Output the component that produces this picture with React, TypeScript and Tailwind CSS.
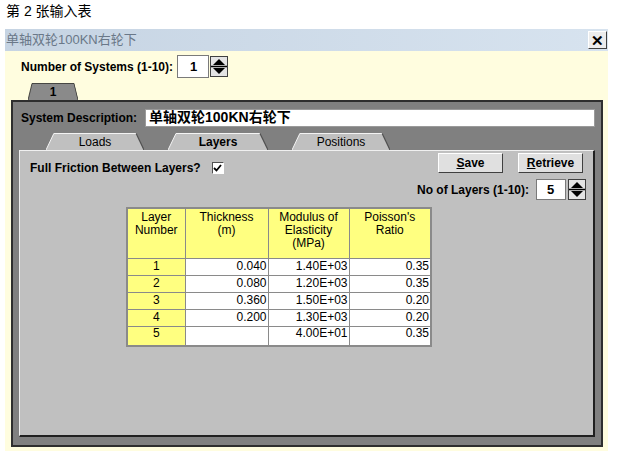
import React from "react";

const Spinner = () => (
  <svg width="18" height="21" viewBox="0 0 18 21" className="block shrink-0">
    <rect x="0.5" y="0.5" width="17" height="20" fill="#e4e4e4" stroke="#404040" />
    <polygon points="3,9 9,3 15,9" fill="#000" />
    <line x1="1" y1="10.5" x2="17" y2="10.5" stroke="#000" strokeWidth="1.5" />
    <polygon points="3,12 15,12 9,18" fill="#000" />
  </svg>
);

const TabShape = ({ fill, light, dark }: { fill: string; light: string; dark: string }) => (
  <svg
    className="absolute inset-0 h-full w-full"
    viewBox="0 0 100 17"
    preserveAspectRatio="none"
  >
    <polygon points="0,17 8,0.5 92,0.5 100,17" fill={fill} />
    <polyline points="0,17 8,0.5 92,0.5" fill="none" stroke={light} strokeWidth="1" />
    <polyline points="92,0.5 100,17" fill="none" stroke={dark} strokeWidth="1.2" />
  </svg>
);

const rows = [
  ["1", "0.040", "1.40E+03", "0.35"],
  ["2", "0.080", "1.20E+03", "0.35"],
  ["3", "0.360", "1.50E+03", "0.20"],
  ["4", "0.200", "1.30E+03", "0.20"],
  ["5", "", "4.00E+01", "0.35"],
];

export default function App() {
  return (
    <div className="h-[451px] w-[622px] overflow-hidden bg-white font-['Liberation_Sans','Noto_Sans_CJK_SC',sans-serif] text-black">
      <div className="h-[29px] pl-[6px] pt-[3px] text-[14px] leading-[16px]">第 2 张输入表</div>
      <div className="ml-[5px] w-[603px]">
        <div className="flex h-[22px] items-center justify-between bg-gradient-to-r from-[#c6d4e3] to-[#d7e3ef] pl-[1px] pr-[1px]">
          <span className="text-[13px] text-[#6a7888]">单轴双轮100KN右轮下</span>
          <div className="flex h-[18px] w-[19px] items-center justify-center border border-t-white border-l-white border-r-[#404040] border-b-[#404040] bg-[#ececec] text-[15px] font-bold leading-none">
            ✕
          </div>
        </div>
        <div className="h-[400px] bg-[#fffddf] pt-[4px]">
          <div className="flex h-[23px] items-center pl-[16px]">
            <span className="text-[12px] font-bold">Number of Systems (1-10):</span>
            <div className="ml-[4px] flex h-[23px] w-[32px] items-center border border-[#7a7a7a] bg-white pl-[12px] text-[13px] font-bold">
              1
            </div>
            <div className="ml-[1px]">
              <Spinner />
            </div>
          </div>
          <div className="mt-[5px] flex h-[17px] pl-[23px]">
            <div className="relative flex h-[17px] w-[50px] items-center justify-center">
              <TabShape fill="#8a8a8a" light="#1e1e1e" dark="#1e1e1e" />
              <span className="relative text-[12px] font-bold leading-none">1</span>
            </div>
          </div>
          <div className="ml-[6px] h-[347px] w-[592px] border-2 border-[#2e2e2e] bg-[#808080] px-[6px] pt-[6px]">
            <div className="flex h-[19px] items-center">
              <span className="pl-[2px] text-[12px] font-bold">System Description:</span>
              <div className="ml-[8px] flex h-[18px] flex-1 items-center border border-[#9a9a9a] bg-white pl-[3px] text-[14px] font-bold">
                单轴双轮100KN右轮下
              </div>
            </div>
            <div className="mt-[6px] flex h-[17px] pl-[27px]">
              <div className="relative flex h-[17px] w-[98px] items-center justify-center">
                <TabShape fill="#c0c0c0" light="#f4f4f4" dark="#505050" />
                <span className="relative text-[12px] leading-none">Loads</span>
              </div>
              <div className="relative ml-[24px] flex h-[17px] w-[100px] items-center justify-center">
                <TabShape fill="#c0c0c0" light="#f4f4f4" dark="#505050" />
                <span className="relative text-[12px] font-bold leading-none">Layers</span>
              </div>
              <div className="relative ml-[24px] flex h-[17px] w-[98px] items-center justify-center">
                <TabShape fill="#c0c0c0" light="#f4f4f4" dark="#505050" />
                <span className="relative text-[12px] leading-none">Positions</span>
              </div>
            </div>
            <div className="h-[287px] border-t border-l border-t-[#f0f0f0] border-l-[#f0f0f0] border-r-2 border-b-2 border-r-[#202020] border-b-[#202020] bg-[#c0c0c0]">
              <div className="flex h-[23px] items-start justify-between pr-[10px]">
                <div className="mt-[8px] flex items-center pl-[10px]">
                  <span className="text-[12px] font-bold">Full Friction Between Layers?</span>
                  <div className="ml-[11px] flex h-[12px] w-[12px] items-center justify-center border border-t-[#505050] border-l-[#505050] border-r-white border-b-white bg-white">
                    <svg width="9" height="8" viewBox="0 0 9 8">
                      <polyline points="1,4 3.5,6.5 8,1" fill="none" stroke="#000" strokeWidth="1.8" />
                    </svg>
                  </div>
                </div>
                <div className="mt-[2px] flex gap-[15px]">
                  <div className="flex h-[20px] w-[65px] items-center justify-center border border-t-white border-l-white border-r-[#404040] border-b-[#404040] bg-[#e0e0e0] text-[12px] font-bold">
                    <span className="underline">S</span>ave
                  </div>
                  <div className="flex h-[20px] w-[65px] items-center justify-center border border-t-white border-l-white border-r-[#404040] border-b-[#404040] bg-[#e0e0e0] text-[12px] font-bold">
                    <span className="underline">R</span>etrieve
                  </div>
                </div>
              </div>
              <div className="mt-[5px] flex h-[21px] items-center justify-end pr-[7px]">
                <span className="text-[12px] font-bold">No of Layers (1-10):</span>
                <div className="ml-[7px] flex h-[21px] w-[30px] items-center border border-[#7a7a7a] bg-white pl-[10px] text-[13px] font-bold">
                  5
                </div>
                <div className="ml-[2px]">
                  <Spinner />
                </div>
              </div>
              <div className="ml-[106px] mt-[7px]">
                <table className="border-collapse border-2 border-[#8a8a8a] text-[12px] leading-[13px]">
                  <thead>
                    <tr className="h-[50px] bg-[#ffff80] align-top">
                      <th className="w-[58px] border border-[#8a8a8a] pt-[2px] font-normal">Layer<br />Number</th>
                      <th className="w-[83px] border border-[#8a8a8a] pt-[2px] font-normal">Thickness<br />(m)</th>
                      <th className="w-[81px] border border-[#8a8a8a] pt-[2px] font-normal">Modulus of<br />Elasticity<br />(MPa)</th>
                      <th className="w-[82px] border border-[#8a8a8a] pt-[2px] font-normal">Poisson's<br />Ratio</th>
                    </tr>
                  </thead>
                  <tbody>
                    {rows.map((r, i) => (
                      <tr key={i} className={i === 4 ? "h-[20px] align-top" : "h-[17px]"}>
                        <td className="border border-[#8a8a8a] bg-[#ffff80] text-center">{r[0]}</td>
                        <td className="border border-[#8a8a8a] bg-white pr-[1px] text-right">{r[1]}</td>
                        <td className="border border-[#8a8a8a] bg-white pr-[1px] text-right">{r[2]}</td>
                        <td className="border border-[#8a8a8a] bg-white pr-[1px] text-right">{r[3]}</td>
                      </tr>
                    ))}
                  </tbody>
                </table>
              </div>
            </div>
          </div>
        </div>
      </div>
    </div>
  );
}
